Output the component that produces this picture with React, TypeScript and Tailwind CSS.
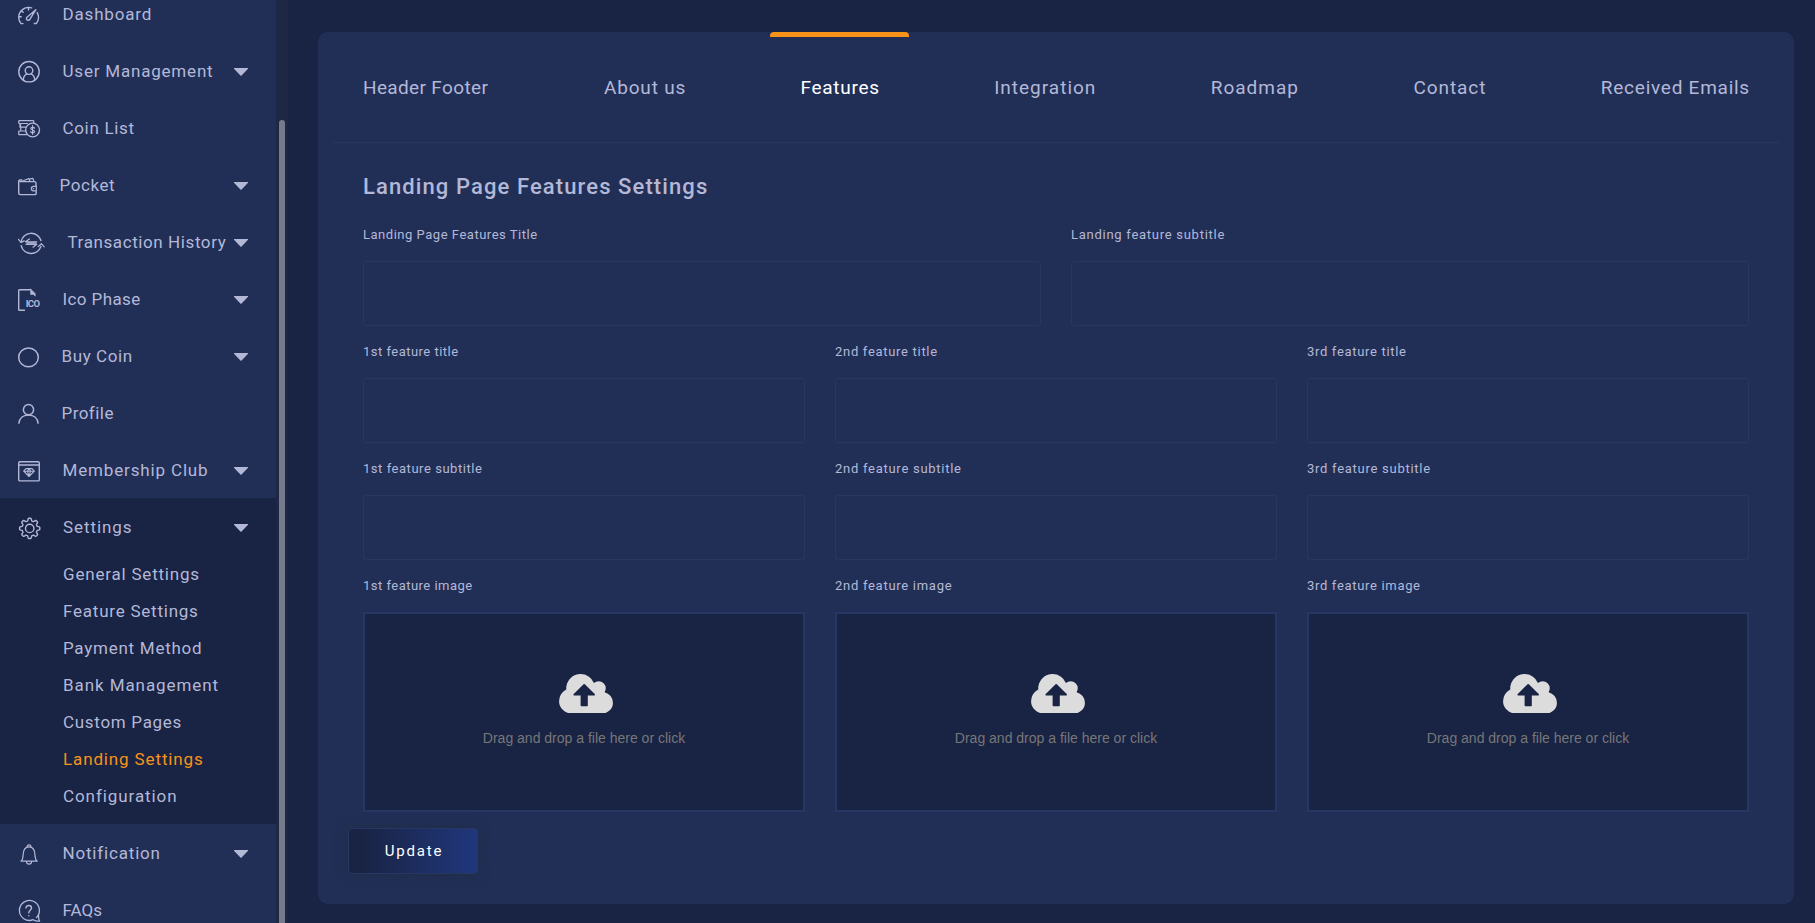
import type { ReactNode } from "react";

const LINE = "fill-none stroke-[#b4b8d7]";

function Icon({ w, children }: { w: string; children: ReactNode }) {
  return (
    <svg className={`${w} ${LINE} mt-[2px] h-6 shrink-0 overflow-visible`} strokeWidth="1.4" strokeLinecap="round" strokeLinejoin="round">
      {children}
    </svg>
  );
}

function gearPath(cx: number, cy: number) {
  const pts: string[] = [];
  for (let i = 0; i < 96; i++) {
    const a = (i / 96) * Math.PI * 2;
    const r = 8.9 + 1.25 * Math.tanh(3 * Math.cos(a * 8));
    pts.push(`${(cx + r * Math.cos(a)).toFixed(2)} ${(cy + r * Math.sin(a)).toFixed(2)}`);
  }
  return `M${pts.join("L")}Z`;
}

const icons = {
  dashboard: (
    <Icon w="w-[22px]">
      <path d="M5 20.600H3C1.400 18.800 .7 16.700 .7 14.300A9.900 9.900 0 0 1 13.600 4.900M19.200 9.600A9.900 9.900 0 0 1 18.300 20.500H16.300M10.500 4.500V7M3.600 8.100L5.200 9.300M1 13.700H3.200" />
      <path d="M17.800 6.700L9 14.200C7.800 15.600 8.500 17.200 9.800 17.300C10.800 17.400 11.600 16.900 12 16.100Z" />
    </Icon>
  ),
  user: (
    <Icon w="w-[22px]">
      <circle cx="11" cy="11.700" r="10.200" />
      <circle cx="11" cy="10.600" r="3.800" />
      <path d="M5.300 19.700C5.600 16.600 7 14.600 9 13.900M16.700 19.700C16.400 16.600 15 14.600 13 13.900" />
    </Icon>
  ),
  coins: (
    <Icon w="w-[22px]">
      <path d="M9.500 6.500H1.800A1 1 0 0 1 .7 5.500V4.400A.8 .8 0 0 1 1.500 3.700H15A.8 .8 0 0 1 15.800 4.400V5.500M2.500 6.700V9.900M1.800 10.100H8M2.800 10.400V13.800M.8 14H7.500M.8 14V17.600H8.600M2 6.600V9.500" strokeWidth="1.200" />
      <circle cx="14.600" cy="13" r="6.900" />
      <path d="M16.500 11.200C16.300 10.100 12.800 9.900 12.700 11.600C12.700 13.300 16.600 12.600 16.600 14.600C16.500 16.200 12.900 16.200 12.600 14.700M14.600 8.700V17.300" strokeWidth="1.200" />
    </Icon>
  ),
  pocket: (
    <Icon w="w-[19px]">
      <path d="M2 7.600H16.500A1.700 1.700 0 0 1 18 9.300V12.300M18.200 17.800V19.300A1.500 1.500 0 0 1 16.700 20.600H2.200A1.500 1.500 0 0 1 .7 19.100V7.300A1.200 1.200 0 0 1 1.900 6H3.800" />
      <path d="M18.300 12.300H15.600A2.200 2.200 0 0 0 15.600 16.800H18.300ZM15.300 14.600H15.600M4.200 7.300L10.700 4.500L11.900 7.300M11.300 5.100L14.900 4.400L16 7.400" strokeWidth="1.200" />
    </Icon>
  ),
  transaction: (
    <Icon w="w-[27px]">
      <path d="M3 11A10.300 10.300 0 0 1 23 9.500M22.900 15.500A10.300 10.300 0 0 1 3.200 14.800" />
      <path d="M.5 8.300L3 11.400L6.300 9.900M20.200 15.600L23.400 12.700L26.200 15.800M18.700 10.800H7.500L11.400 7.900M8 13.300H18.800L15 16.200" strokeWidth="1.200" />
      <path d="M9 12H18" strokeWidth="1.500" />
    </Icon>
  ),
  ico: (
    <Icon w="w-[22px]">
      <path d="M6.500 22.300H1.600A.9 .9 0 0 1 .7 21.400V2.600A.9 .9 0 0 1 1.600 1.700H12.500" />
      <path d="M12.600 1.300V6.400H15.500L17.200 8.200V5.700Z" className="fill-[#b4b8d7]" strokeWidth=".6" />
      <text x="7.700" y="19.200" textLength="14.300" className="fill-[#b4b8d7] stroke-none font-['Roboto',sans-serif] text-[9.500px] font-bold">ICO</text>
    </Icon>
  ),
  circle: (
    <Icon w="w-[21px]">
      <ellipse cx="10.500" cy="12.400" rx="9.800" ry="9.400" strokeWidth="1.500" />
    </Icon>
  ),
  profile: (
    <Icon w="w-[21px]">
      <circle cx="10.500" cy="7.700" r="5.100" strokeWidth="1.500" />
      <path d="M.8 21.700C1.200 16.200 5.200 12.900 10.500 12.900S19.800 16.200 20.200 21.700" strokeWidth="1.500" strokeLinecap="butt" />
    </Icon>
  ),
  membership: (
    <Icon w="w-[22px]">
      <rect x=".7" y="2.700" width="20.600" height="19.200" rx="1.200" />
      <path d="M1 6H21" />
      <path d="M8 9.600H14L16.300 12.200L11 17.500L5.700 12.200ZM5.700 12.200H16.300M9.500 12.200L11 17.500L12.500 12.200L11 9.600Z" strokeWidth="1.100" />
    </Icon>
  ),
  settings: (
    <Icon w="w-[22.500px]">
      <path d={gearPath(11.7, 12.4)} />
      <circle cx="11.700" cy="12.400" r="4.200" />
    </Icon>
  ),
  bell: (
    <Icon w="w-[22px]">
      <path d="M3 19.200H19.200C17.500 17.900 17.100 16.300 17 13.300C16.900 8.700 15.600 4.900 11 4.900S5.200 8.700 5.100 13.300C5 16.300 4.700 17.900 3 19.200Z" strokeWidth="1.200" />
      <path d="M9.300 5A1.800 1.800 0 1 1 12.800 5M8.500 19.500C8.700 23 13.400 23 13.600 19.500" strokeWidth="1.200" />
    </Icon>
  ),
  faq: (
    <Icon w="w-[22px]">
      <path d="M18.400 18.600A10 10 0 1 0 15.200 20.700C17 22 19.300 22.400 21.600 22.100C20.600 20.600 20.400 19.700 20.500 16.200" strokeWidth="1.300" />
      <path d="M8 9.100C8 5.600 13.500 5.700 13.500 9.100C13.500 11.300 10.800 11.300 10.800 13.900M10.800 16.600V16.700" strokeWidth="1.400" />
    </Icon>
  ),
};

function NavItem({ icon, label, tracking, arrow = false }: { icon: ReactNode; label: string; tracking: string; arrow?: boolean }) {
  return (
    <a className="flex h-[57px] shrink-0 items-center pr-7 pl-[18px] whitespace-nowrap">
      {icon}
      <span className={`ml-[22.5px] ${tracking}`}>{label}</span>
      {arrow && (
        <svg className="mt-[2px] ml-auto h-2 w-[14px] shrink-0 fill-[#b4b8d7]" viewBox="0 0 14 8">
          <path d="M0 0H14V.8L7.600 7.600Q7 8 6.400 7.600L0 .8Z" />
        </svg>
      )}
    </a>
  );
}

const settingsLinks = [
  { label: "General Settings", style: "tracking-[0.8px]" },
  { label: "Feature Settings", style: "tracking-[0.77px]" },
  { label: "Payment Method", style: "tracking-[0.74px]" },
  { label: "Bank Management", style: "tracking-[0.92px]" },
  { label: "Custom Pages", style: "tracking-[0.7px]" },
  { label: "Landing Settings", style: "tracking-[0.87px] text-[#f7931a]" },
  { label: "Configuration", style: "tracking-[0.92px]" },
];

function Sidebar() {
  return (
    <nav className="-mt-[15px] flex w-[276px] shrink-0 flex-col bg-[#212f57] text-[17px] leading-6">
      <NavItem icon={icons.dashboard} label="Dashboard" tracking="tracking-[0.83px]" />
      <NavItem icon={icons.user} label="User Management" tracking="tracking-[0.8px]" arrow />
      <NavItem icon={icons.coins} label="Coin List" tracking="tracking-[0.68px]" />
      <NavItem icon={icons.pocket} label="Pocket" tracking="tracking-[0.56px]" arrow />
      <NavItem icon={icons.transaction} label="Transaction History" tracking="tracking-[0.59px]" arrow />
      <NavItem icon={icons.ico} label="Ico Phase" tracking="tracking-[0.4px]" arrow />
      <NavItem icon={icons.circle} label="Buy Coin" tracking="tracking-[0.6px]" arrow />
      <NavItem icon={icons.profile} label="Profile" tracking="tracking-[0.45px]" />
      <NavItem icon={icons.membership} label="Membership Club" tracking="tracking-[0.85px]" arrow />
      <div className="flex shrink-0 flex-col bg-[#192344] pb-[10px]">
        <NavItem icon={icons.settings} label="Settings" tracking="tracking-[0.93px]" arrow />
        {settingsLinks.map((l) => (
          <a key={l.label} className={`flex h-[37px] items-center pl-[63px] ${l.style}`}>
            {l.label}
          </a>
        ))}
      </div>
      <NavItem icon={icons.bell} label="Notification" tracking="tracking-[0.82px]" arrow />
      <NavItem icon={icons.faq} label="FAQs" tracking="tracking-[0.05px]" />
    </nav>
  );
}

const tabs = [
  { label: "Header Footer", style: "tracking-[0.35px]" },
  { label: "About us", style: "tracking-[0.8px]" },
  { label: "Features", style: "tracking-[0.72px] text-white", active: true },
  { label: "Integration", style: "tracking-[1px]" },
  { label: "Roadmap", style: "tracking-[1px]" },
  { label: "Contact", style: "tracking-[0.95px]" },
  { label: "Received Emails", style: "tracking-[0.75px]" },
];

function Label({ text, tracking }: { text: string; tracking: string }) {
  return <label className={`flex h-[52px] items-center text-[13px] leading-5 ${tracking}`}>{text}</label>;
}

function Field({ label, tracking }: { label: string; tracking: string }) {
  return (
    <div>
      <Label text={label} tracking={tracking} />
      <input className="block h-[65px] w-full rounded-[3px] border border-[#29365f] bg-transparent px-4 outline-none" />
    </div>
  );
}

function Dropzone({ label, tracking }: { label: string; tracking: string }) {
  return (
    <div>
      <Label text={label} tracking={tracking} />
      <div className="flex h-[200px] flex-col items-center border-2 border-[#283663] bg-[#192344] pt-[59.5px]">
        <svg className="ml-1 h-[39.5px] w-[54px] fill-[#dcdcdc]" viewBox="0 0 1920 1408">
          <path
            fillRule="evenodd"
            d="M1280 736q0-14-9-23L919 361q-9-9-23-9t-23 9L522 712q-10 12-10 24 0 14 9 23t23 9h224v352q0 13 9.500 22.500t22.500 9.500h192q13 0 22.500-9.500t9.500-22.500V768h224q13 0 22.500-9.500t9.500-22.500zm640 288q0 159-112.500 271.500T1536 1408H448q-185 0-316.500-131.500T0 960q0-130 70-240t188-165q-2-30-2-43 0-212 150-362T768 0q156 0 285.500 87T1242 318q71-62 166-62 106 0 181 75t75 181q0 76-41 138 130 31 213.500 135.500T1920 1024z"
          />
        </svg>
        <p className="mt-[15px] font-['Liberation_Sans',Arial,sans-serif] text-sm leading-5 text-[#777777]">Drag and drop a file here or click</p>
      </div>
    </div>
  );
}

export default function App() {
  return (
    <div className="flex h-[923px] overflow-hidden bg-[#192344] font-['Roboto',sans-serif] text-[#b4b8d7]">
      <Sidebar />
      <div className="flex w-3 shrink-0 justify-center bg-[#1e2744] pt-[120px]">
        <div className="w-[6px] rounded-t-full bg-[#757a8d]" />
      </div>
      <main className="flex-1 pt-8 pr-[21px] pl-[30px]">
        <section className="rounded-[10px] bg-[#212f57] pb-[30px]">
          <div className="mx-[15px] flex h-[111px] items-center justify-between border-b border-[#29365f] pr-[29px] pl-[30px] text-[19px] leading-7">
            {tabs.map((t) => (
              <a key={t.label} className={`relative flex h-full items-center pt-[2px] first:mr-[1.5px] ${t.style}`}>
                {t.active && <span className="absolute top-0 -left-[30.5px] h-[5px] w-[139px] rounded-t-[4px] bg-[#f7931a]" />}
                {t.label}
              </a>
            ))}
          </div>
          <form className="px-[45px]">
            <h4 className="flex h-[66px] items-center pt-[21px] text-[22px] leading-8 font-medium tracking-[1.1px]">Landing Page Features Settings</h4>
            <div className="grid grid-cols-2 gap-x-[30px]">
              <Field label="Landing Page Features Title" tracking="tracking-[0.52px]" />
              <Field label="Landing feature subtitle" tracking="tracking-[0.73px]" />
            </div>
            <div className="grid grid-cols-3 gap-x-[30px]">
              <Field label="1st feature title" tracking="tracking-[0.48px]" />
              <Field label="2nd feature title" tracking="tracking-[0.7px]" />
              <Field label="3rd feature title" tracking="tracking-[0.68px]" />
              <Field label="1st feature subtitle" tracking="tracking-[0.54px]" />
              <Field label="2nd feature subtitle" tracking="tracking-[0.73px]" />
              <Field label="3rd feature subtitle" tracking="tracking-[0.73px]" />
              <Dropzone label="1st feature image" tracking="tracking-[0.48px]" />
              <Dropzone label="2nd feature image" tracking="tracking-[0.72px]" />
              <Dropzone label="3rd feature image" tracking="tracking-[0.68px]" />
            </div>
            <button
              type="button"
              className="mt-4 -ml-[15px] block h-[46px] w-[130px] rounded-[4px] border border-[#283663] bg-linear-to-r from-[#192344] from-10% to-[#20377d] pl-[2px] text-[15px] tracking-[1.85px] text-white shadow-[0_0_12px_rgba(31,45,61,0.7)]"
            >
              Update
            </button>
          </form>
        </section>
      </main>
    </div>
  );
}
